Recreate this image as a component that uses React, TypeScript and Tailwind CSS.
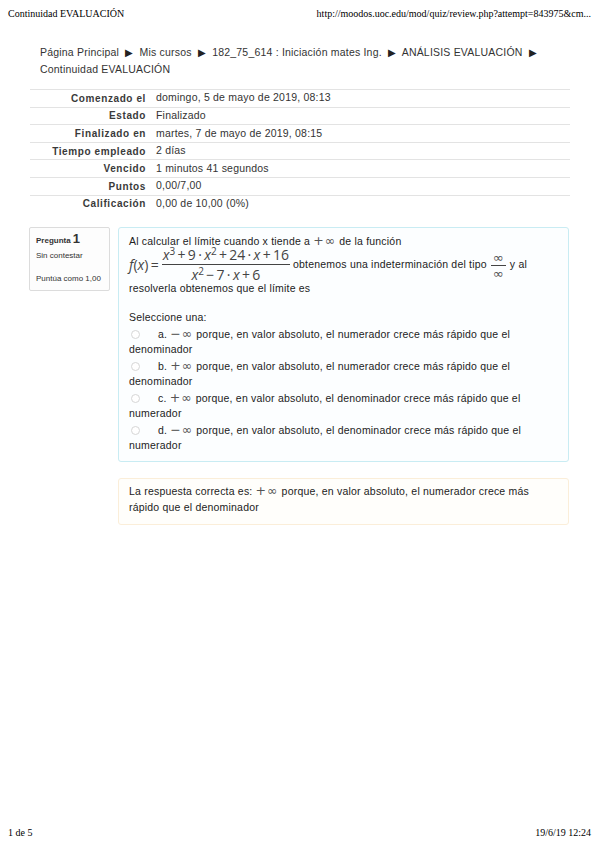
import React from "react";

const datos = [
  ["Comenzado el", "domingo, 5 de mayo de 2019, 08:13"],
  ["Estado", "Finalizado"],
  ["Finalizado en", "martes, 7 de mayo de 2019, 08:15"],
  ["Tiempo empleado", "2 días"],
  ["Vencido", "1 minutos 41 segundos"],
  ["Puntos", "0,00/7,00"],
  ["Calificación", "0,00 de 10,00 (0%)"],
];

const opciones = [
  ["a.", "−∞", "porque, en valor absoluto, el numerador crece más rápido que el denominador"],
  ["b.", "+∞", "porque, en valor absoluto, el numerador crece más rápido que el denominador"],
  ["c.", "+∞", "porque, en valor absoluto, el denominador crece más rápido que el numerador"],
  ["d.", "−∞", "porque, en valor absoluto, el denominador crece más rápido que el numerador"],
];

function Inf({ s }: { s: string }) {
  // signo + infinito, algo mayor que el texto
  return <span className="font-['DejaVu_Sans',sans-serif] text-[12.5px] tracking-[1px] text-[#555]">{s}</span>;
}

export default function App() {
  return (
    <div className="w-[599px] h-[848px] bg-white flex flex-col font-['Liberation_Sans',Arial,sans-serif] text-[#333] tracking-[0.2px]">
      {/* cabecera de impresión */}
      <div className="flex justify-between px-2 pt-[6px] font-['Liberation_Serif',serif] text-[10px] tracking-normal text-black">
        <span>Continuidad EVALUACIÓN</span>
        <span>http://moodos.uoc.edu/mod/quiz/review.php?attempt=843975&amp;cm...</span>
      </div>

      <div className="px-[30px] pt-[23px]">
        {/* migas de pan */}
        <div className="pl-[10px] text-[10.5px] leading-[16px] text-[#333]">
          Página Principal <span className="text-[10px] mx-[3px] text-[#222]">▶</span> Mis cursos{" "}
          <span className="text-[10px] mx-[3px] text-[#222]">▶</span> 182_75_614 : Iniciación mates Ing.{" "}
          <span className="text-[10px] mx-[3px] text-[#222]">▶</span> ANÁLISIS EVALUACIÓN{" "}
          <span className="text-[10px] mx-[3px] text-[#222]">▶</span>
          <br />
          Continuidad EVALUACIÓN
        </div>

        {/* resumen del intento */}
        <div className="mt-[12px] w-[540px] text-[10.5px]">
          {datos.map(([k, v]) => (
            <div key={k} className="flex items-center h-[17.6px] border-t border-[#e3e3e3]">
              <div className="w-[116px] text-right font-bold tracking-[0.6px] text-[10px] text-[#3a3a3a]">{k}</div>
              <div className="pl-[10px]">{v}</div>
            </div>
          ))}
        </div>

        {/* pregunta */}
        <div className="mt-[15px] flex gap-[8px] items-start">
          <div className="w-[83px] h-[64px] -ml-px border border-[#dcdcdc] rounded-[2px] bg-[#fdfdfd] px-[6px] pt-[4px] text-[8px] tracking-normal text-[#333]">
            <div className="flex items-baseline gap-[2px] h-[16px]">
              <span className="font-bold">Pregunta</span>
              <span className="font-bold text-[13px] leading-none">1</span>
            </div>
            <div className="mt-[2px]">Sin contestar</div>
            <div className="mt-[11px]">Puntúa como 1,00</div>
          </div>

          <div className="flex flex-col gap-[16px]">
            <div className="w-[451px] h-[235px] border border-[#c9ecf3] rounded-[3px] bg-[#fcfeff] px-[10px] pt-[5px] text-[10.5px] leading-[15.5px] text-[#222]">
              <div>
                Al calcular el límite cuando x tiende a <Inf s="+∞" /> de la función
              </div>
              <div className="flex items-center h-[31px]">
                <span className="font-['Open_Sans',sans-serif] text-[14px] tracking-normal text-[#444]">
                  <i>f</i>(<i>x</i>)&thinsp;=
                </span>
                <span className="inline-flex flex-col items-center mx-[3px] font-['Open_Sans',sans-serif] text-[14px] leading-[20px] tracking-normal text-[#444]">
                  <span className="px-[1px] border-b border-[#444] leading-[19px]">
                    <i>x</i>
                    <sup className="text-[10px]">3</sup>&thinsp;+&thinsp;9&thinsp;·&thinsp;<i>x</i>
                    <sup className="text-[10px]">2</sup>&thinsp;+&thinsp;24&thinsp;·&thinsp;<i>x</i>&thinsp;+&thinsp;16
                  </span>
                  <span>
                    <i>x</i>
                    <sup className="text-[10px]">2</sup>&thinsp;−&thinsp;7&thinsp;·&thinsp;<i>x</i>&thinsp;+&thinsp;6
                  </span>
                </span>
                <span>obtenemos una indeterminación del tipo</span>
                <span className="inline-flex flex-col items-center mx-[4px] font-['DejaVu_Sans',sans-serif] text-[13px] leading-[15px] text-[#555]">
                  <span className="px-[2px] border-b border-[#444]">∞</span>
                  <span>∞</span>
                </span>
                <span>y al</span>
              </div>
              <div>resolverla obtenemos que el límite es</div>

              <div className="mt-[14px]">Seleccione una:</div>
              {opciones.map(([l, s, t]) => (
                <div key={l}>
                  <span className="inline-block align-[-1px] w-[9px] h-[9px] ml-[2px] mr-[18px] rounded-full border border-[#d6d6d6] bg-white"></span>
                  {l} <Inf s={s} /> {t}
                </div>
              ))}
            </div>

            <div className="w-[451px] h-[47px] border border-[#fbeed9] rounded-[3px] bg-[#fffefb] px-[10px] pt-[4px] text-[10.5px] leading-[16px] text-[#222]">
              La respuesta correcta es: <Inf s="+∞" /> porque, en valor absoluto, el numerador crece más rápido que el
              denominador
            </div>
          </div>
        </div>
      </div>

      {/* pie de impresión */}
      <div className="mt-auto flex justify-between px-2 pb-[8px] font-['Liberation_Serif',serif] text-[10px] tracking-normal text-black">
        <span>1 de 5</span>
        <span>19/6/19 12:24</span>
      </div>
    </div>
  );
}
